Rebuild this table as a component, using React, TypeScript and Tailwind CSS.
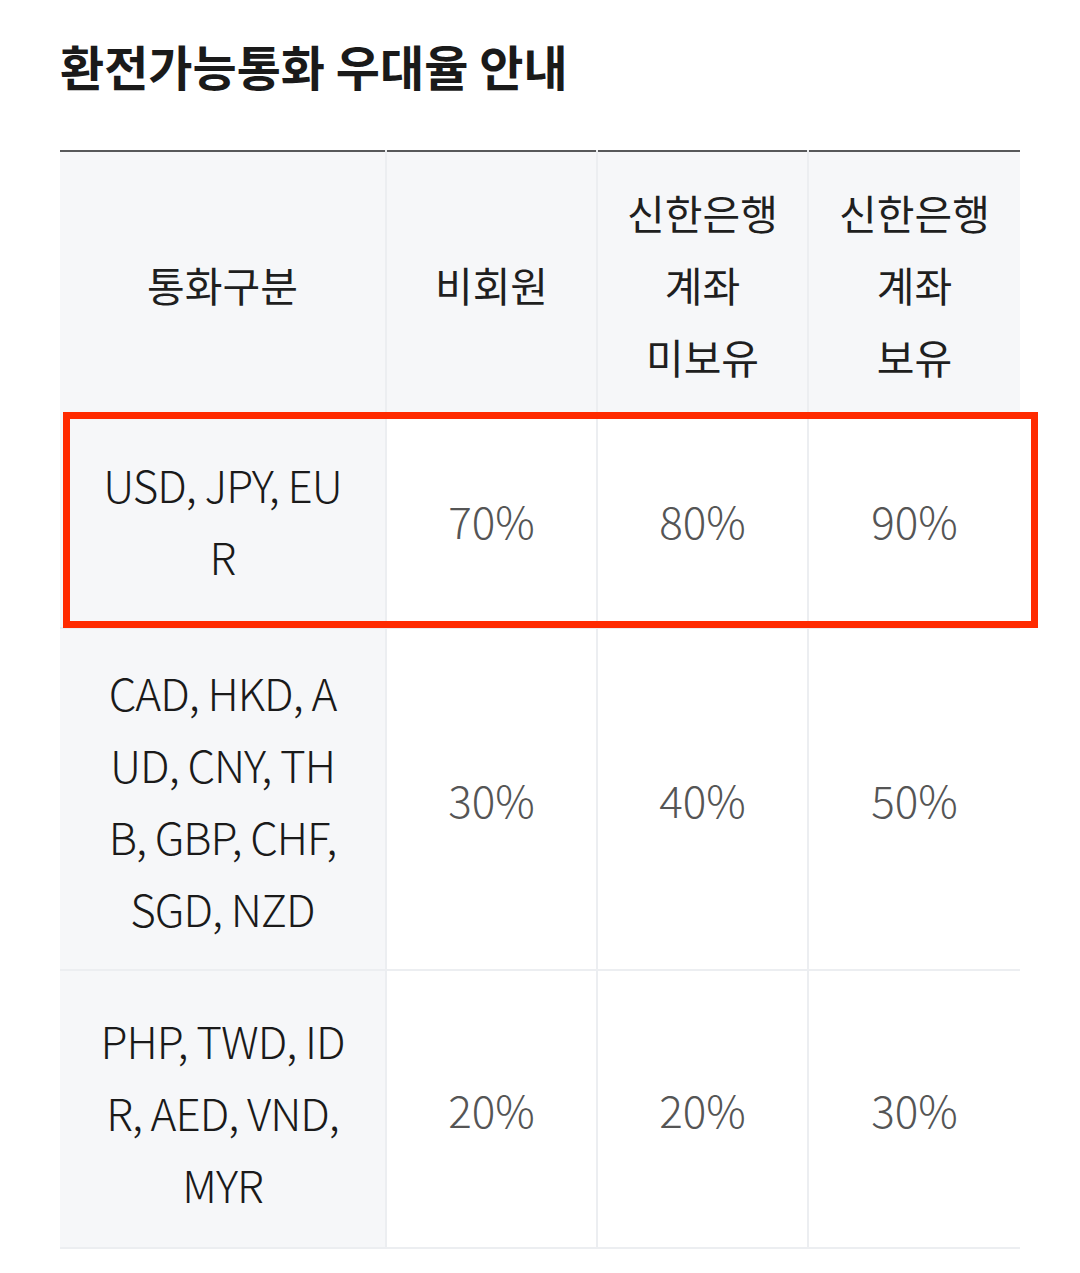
import { FC } from 'react'

type RateRow = {
  currencies: string
  guest: string
  noAccount: string
  account: string
  cellPad: string
  highlight?: boolean
}

const rows: RateRow[] = [
  {
    currencies: 'USD, JPY, EUR',
    guest: '70%',
    noAccount: '80%',
    account: '90%',
    cellPad: 'py-[30px]',
    highlight: true
  },
  {
    currencies: 'CAD, HKD, AUD, CNY, THB, GBP, CHF, SGD, NZD',
    guest: '30%',
    noAccount: '40%',
    account: '50%',
    cellPad: 'pt-[27px] pb-[25px]'
  },
  {
    currencies: 'PHP, TWD, IDR, AED, VND, MYR',
    guest: '20%',
    noAccount: '20%',
    account: '30%',
    cellPad: 'pt-[33px] pb-[27px]'
  }
]

const font = { fontFamily: '"Noto Sans CJK KR", "Noto Sans", sans-serif' }

const App: FC = () => {
  return (
    <div className="min-h-[1273px] w-[1080px] bg-white px-[60px] pt-[32px]" style={font}>
      <h1 className="text-[48px] font-bold leading-[66px] text-[#1a1a1a]">
        환전가능통화 우대율 안내
      </h1>

      <table className="mt-[52px] w-[960px] table-fixed border-collapse border-t-2 border-[#58595b] text-center">
        <colgroup>
          <col className="w-[326px]" />
          <col className="w-[211px]" />
          <col className="w-[211px]" />
          <col className="w-[212px]" />
        </colgroup>
        <thead>
          <tr className="h-[261px] bg-[#f6f7f9] text-[41px] leading-[72px] text-[#1f1f1f]">
            <th className="border-r-2 border-[#eceef1] pt-[4px] font-normal">통화구분</th>
            <th className="border-r-2 border-[#eceef1] pt-[4px] font-normal">비회원</th>
            <th className="border-r-2 border-[#eceef1] px-2 pt-[4px] font-normal">
              신한은행
              <br />
              계좌
              <br />
              미보유
            </th>
            <th className="px-2 pt-[4px] font-normal">
              신한은행
              <br />
              계좌
              <br />
              보유
            </th>
          </tr>
        </thead>
        <tbody className="text-[44px] font-light leading-[72px]">
          {rows.map(row => (
            <tr
              key={row.currencies}
              className={`border-b-2 border-[#eceef1] ${row.highlight ? 'h-[216px]' : ''}`}
            >
              <td
                className={`relative break-all border-r-2 border-[#eceef1] bg-[#f6f7f9] px-[38px] tracking-[-1px] text-[#1a1a1a] ${row.cellPad}`}
              >
                {row.currencies}
                {row.highlight && (
                  <div className="pointer-events-none absolute top-[0px] left-[3px] h-[216px] w-[975px] border-[7px] border-[#ff2a00]" />
                )}
              </td>
              <td className="border-r-2 border-[#eceef1] text-[#555]">{row.guest}</td>
              <td className="border-r-2 border-[#eceef1] text-[#555]">{row.noAccount}</td>
              <td className="text-[#555]">{row.account}</td>
            </tr>
          ))}
        </tbody>
      </table>
    </div>
  )
}

export default App
